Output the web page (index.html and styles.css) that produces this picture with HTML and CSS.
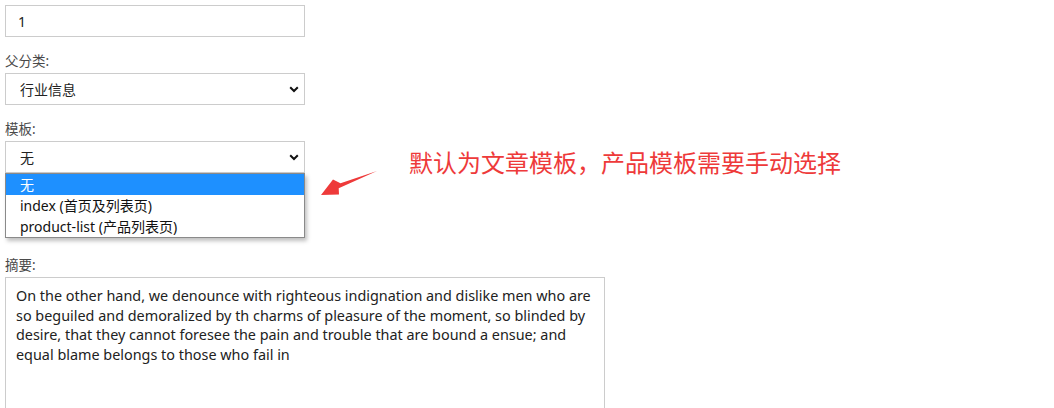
FILE: index.html
```html
<!DOCTYPE html>
<html lang="zh-CN">
<head>
<meta charset="utf-8">
<title>分类编辑</title>
<link rel="stylesheet" href="styles.css">
</head>
<body>
<form class="form">
  <div class="field">
    <label class="label">排序:</label>
    <input class="control" type="text" value="1">
  </div>
  <div class="field">
    <label class="label">父分类:</label>
    <div class="select-wrap">
      <select class="control select"><option>行业信息</option></select>
      <svg class="chev" width="10" height="7" viewBox="0 0 10 7"><path d="M1.2 1.2 L5 5 L8.8 1.2" fill="none" stroke="#111" stroke-width="2"/></svg>
    </div>
  </div>
  <div class="field field-open">
    <label class="label">模板:</label>
    <div class="select-wrap">
      <select class="control select"><option>无</option><option>index (首页及列表页)</option><option>product-list (产品列表页)</option></select>
      <svg class="chev" width="10" height="7" viewBox="0 0 10 7"><path d="M1.2 1.2 L5 5 L8.8 1.2" fill="none" stroke="#111" stroke-width="2"/></svg>
      <ul class="menu">
        <li class="opt active">无</li>
        <li class="opt">index (首页及列表页)</li>
        <li class="opt">product-list (产品列表页)</li>
      </ul>
    </div>
  </div>
  <div class="field">
    <label class="label">摘要:</label>
    <textarea class="control area">On the other hand, we denounce with righteous indignation and dislike men who are so beguiled and demoralized by th charms of pleasure of the moment, so blinded by desire, that they cannot foresee the pain and trouble that are bound a ensue; and equal blame belongs to those who fail in</textarea>
  </div>
</form>
<div class="note">默认为文章模板，产品模板需要手动选择</div>
<svg class="arrow" width="70" height="36" viewBox="0 0 70 36">
  <polygon points="3,27 15,11.5 22.5,15.2 59,3 20.7,20.2 21,26.5" fill="#ee3a3a"/>
</svg>
</body>
</html>
```
FILE: styles.css
```css
html, body {
  margin: 0;
  padding: 0;
  background: #fff;
  overflow: hidden;
}
body {
  width: 1054px;
  height: 408px;
  position: relative;
  font-family: "Noto Sans", "Noto Sans CJK SC", sans-serif;
}
.form {
  margin: -16px 0 0 5px;
  width: 600px;
}
.field {
  display: flex;
  flex-direction: column;
  gap: 3px;
  margin-bottom: 15px;
}
.field-open {
  margin-bottom: 83px;
}
.label {
  font-size: 13.5px;
  line-height: 18px;
  color: #4a4a4a;
}
.control {
  box-sizing: border-box;
  width: 300px;
  height: 32px;
  border: 1px solid #ccc;
  border-radius: 0;
  padding: 0 12px;
  font-family: "Noto Sans", "Noto Sans CJK SC", sans-serif;
  font-size: 14px;
  color: #222;
  background: #fff;
  margin: 0;
  outline: none;
}
.select-wrap {
  position: relative;
  width: 300px;
  height: 32px;
}
.select {
  appearance: none;
  -webkit-appearance: none;
  padding-left: 14px;
}
.chev {
  position: absolute;
  right: 6px;
  top: 13px;
  pointer-events: none;
}
.menu {
  position: absolute;
  left: 0;
  top: 32px;
  width: 300px;
  box-sizing: border-box;
  margin: 0;
  padding: 0;
  list-style: none;
  background: #fff;
  border: 1px solid #8a8a8a;
  box-shadow: 2px 3px 4px rgba(0,0,0,0.25);
  z-index: 5;
}
.opt {
  height: 21px;
  line-height: 21px;
  padding-left: 14px;
  font-size: 14px;
  color: #111;
}
.opt.active {
  background: #1e90ff;
  color: #fff;
}
.area {
  width: 600px;
  height: 140px;
  padding: 8px 10px;
  font-size: 14.4px;
  line-height: 19.6px;
  resize: both;
  color: #222;
}
.note {
  position: absolute;
  left: 409px;
  top: 146px;
  font-family: "Noto Sans CJK SC", sans-serif;
  font-size: 24px;
  line-height: 32px;
  color: #ee3a3a;
  white-space: nowrap;
}
.arrow {
  position: absolute;
  left: 318px;
  top: 168px;
}
```
